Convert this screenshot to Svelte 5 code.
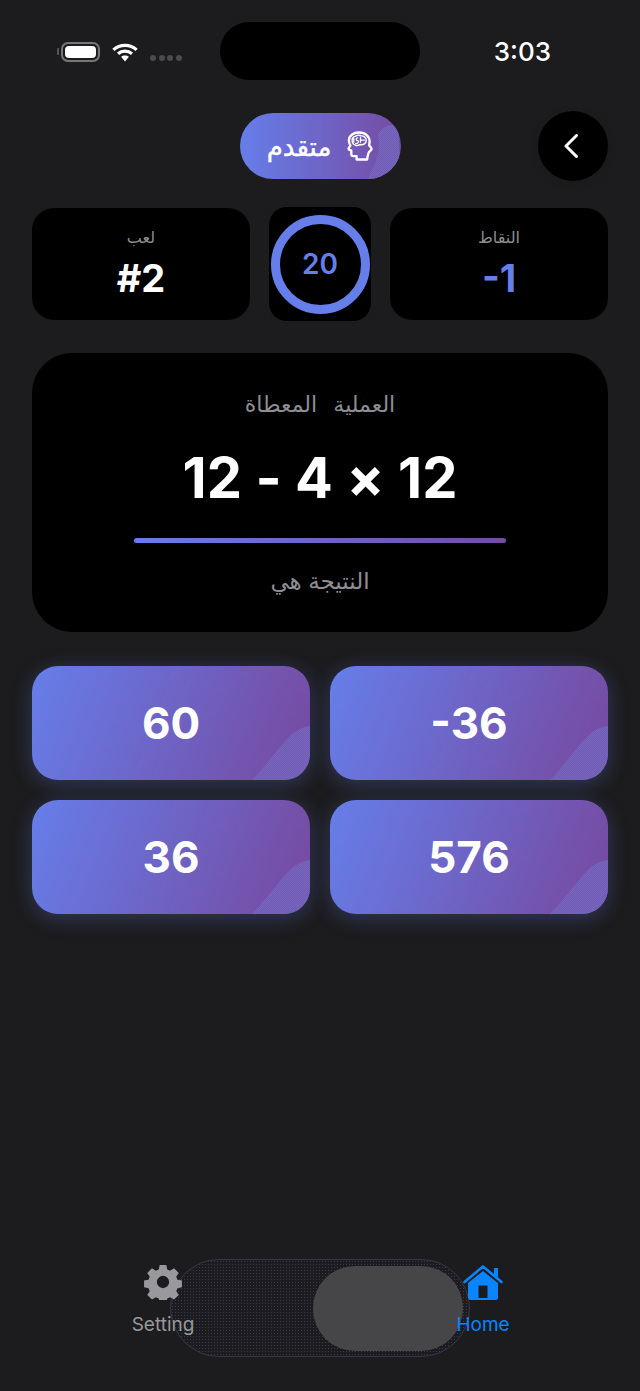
<script>
  const answers = ['60', '-36', '36', '576'];
</script>

<div class="screen">
  <div class="status">
    <div class="status-left">
      <div class="battery"><div class="battery-fill"></div></div>
      <svg class="wifi" viewBox="0 0 28 22" aria-hidden="true">
        <path d="M1.500 8.200C8.500 1.600 19.500 1.600 26.500 8.200" class="arc" />
        <path d="M6.500 12.400C10.800 8.600 17.200 8.600 21.500 12.400" class="arc" />
        <path d="M9.800 15.600 14 20.600 18.200 15.600C15.800 13.600 12.200 13.600 9.800 15.600Z" fill="#fff" />
      </svg>
      <div class="dots"><i></i><i></i><i></i><i></i></div>
    </div>
    <div class="island"></div>
    <div class="time">3:03</div>
  </div>

  <div class="header">
    <div class="level">
      <svg class="blob" viewBox="0 0 161 66" aria-hidden="true">
        <defs>
          <pattern id="dither-level" width="2" height="2" patternUnits="userSpaceOnUse">
            <rect width="2" height="2" fill="#7a58aa" />
            <rect width="1" height="1" fill="#6e6ac8" />
            <rect x="1" y="1" width="1" height="1" fill="#6e6ac8" />
          </pattern>
        </defs>
        <path d="M128 66C135 50 141 40 138 22 141 15 149 10 158 12L161 66Z" fill="url(#dither-level)" />
      </svg>
      <span class="level-text">متقدم</span>
      <svg class="brain" viewBox="0 0 28 32" aria-hidden="true">
        <g transform="translate(28 0) scale(-1 1)">
          <path d="M6 29.500h11v-3.500h3.500c1.600 0 2-1 2-2.200V20c1.800 0 2.800-.6 2.800-1.700 0-1-1-2-1.800-3.300.8-1.500 1.500-3 1.500-5.200C25 4.800 20.500 1.500 14.500 1.500 8 1.500 3.500 5.500 3.500 11c0 1.500.5 2.500.5 3.500 0 1-2.500 2-2.500 4 0 1.700 2.500 2.200 3 4 .5 2 1.500 3.500 1.500 7Z" fill="none" stroke="#fff" stroke-width="2.400" stroke-linejoin="round"/>
          <path d="M7 9.500c0-2.500 2.500-4.500 5-4.500 1.500-1 5-1 6.500.5 2.500.5 3.500 3 3 5.500-.5 2-2 3.500-4 4-2.500 0-3.500-1-5-1-2 .5-5.500-1-5.500-4.500Z" fill="none" stroke="#fff" stroke-width="1.500"/>
          <path d="M9 9.500h4M13 6.500v5M16 7c2 0 2 3 0 3s-1 3 2 3M20 7.500v4" fill="none" stroke="#fff" stroke-width="1.300" stroke-linecap="round"/>
        </g>
      </svg>
    </div>
    <button class="back" aria-label="Back">
      <svg viewBox="0 0 16 24" aria-hidden="true"><path d="M13.500 1.500 3 12l10.500 10.500" fill="none" stroke="#fff" stroke-width="3" stroke-linecap="round" stroke-linejoin="round"/></svg>
    </button>
  </div>

  <div class="stats">
    <div class="stat">
      <span class="stat-label">لعب</span>
      <span class="stat-value">#2</span>
    </div>
    <div class="timer">
      <div class="ring">20</div>
    </div>
    <div class="stat">
      <span class="stat-label">النقاط</span>
      <span class="stat-value accent">-1</span>
    </div>
  </div>

  <div class="problem">
    <div class="problem-label">العملية المعطاة</div>
    <div class="expr">12 - 4 × 12</div>
    <div class="rule"></div>
    <div class="result-label">النتيجة هي</div>
  </div>

  <div class="answers">
    {#each answers as a, i}
      <button class="answer">
        <svg class="corner" viewBox="0 0 58 54" aria-hidden="true">
          <defs>
            <pattern id="dither-{i}" width="2" height="2" patternUnits="userSpaceOnUse">
              <rect width="2" height="2" fill="#7a59ac" />
              <rect width="1" height="1" fill="#6e69c6" />
              <rect x="1" y="1" width="1" height="1" fill="#6e69c6" />
            </pattern>
          </defs>
          <path d="M0 54C14 40 26 22 36 12 42 5 50 1 58 0V54Z" fill="url(#dither-{i})" />
        </svg>
        <span>{a}</span>
      </button>
    {/each}
  </div>

  <div class="tabs">
    <div class="glass"><div class="thumb"></div></div>
    <div class="tab">
      <svg class="tab-icon" viewBox="0 0 38 38" aria-hidden="true">
        <path fill="#98989d" fill-rule="evenodd" d="M15.500 1h7l1 4.700 3.100 1.300 4-2.600 5 5-2.600 4 1.300 3.100 4.700 1v7l-4.700 1-1.300 3.100 2.600 4-5 5-4-2.600-3.100 1.300-1 4.700h-7l-1-4.700-3.100-1.300-4 2.600-5-5 2.600-4-1.300-3.100-4.700-1v-7l4.700-1 1.300-3.100-2.600-4 5-5 4 2.600 3.100-1.300ZM19 12.500a6.500 6.500 0 1 0 0 13 6.500 6.500 0 0 0 0-13Z" />
      </svg>
      <span class="tab-label">Setting</span>
    </div>
    <div class="tab active">
      <svg class="tab-icon" viewBox="0 0 40 36" aria-hidden="true">
        <path d="M1.500 18 20 2.500 38.500 18" fill="none" stroke="#0a84ff" stroke-width="2.600" stroke-linecap="round" stroke-linejoin="round"/>
        <path d="M31 4h4v10l-4-3Z" fill="#0a84ff"/>
        <path fill="#0a84ff" fill-rule="evenodd" d="M20 7 35 19v14.500a2.500 2.500 0 0 1-2.500 2.500h-25A2.500 2.500 0 0 1 5 33.500V19ZM15.500 21.500v12.500h9V21.500Z"/>
      </svg>
      <span class="tab-label">Home</span>
    </div>
  </div>
</div>

<style>
  :global(body) {
    margin: 0;
    background: #1c1c1e;
  }
  .screen {
    width: 640px;
    height: 1391px;
    box-sizing: border-box;
    padding: 22px 32px 0;
    display: flex;
    flex-direction: column;
    background: #1c1c1e;
    font-family: Inter, "DejaVu Sans", sans-serif;
    color: #fff;
    overflow: hidden;
  }
  .status {
    height: 58px;
    display: grid;
    grid-template-columns: 1fr 200px 1fr;
    align-items: center;
  }
  .status-left {
    display: flex;
    align-items: center;
    padding-left: 29px;
  }
  .battery {
    position: relative;
    width: 39px;
    height: 20px;
    margin-top: 2px;
    box-sizing: border-box;
    border: 2px solid #77777b;
    border-radius: 7px;
    padding: 2px;
  }
  .battery::before {
    content: '';
    position: absolute;
    left: -6px;
    top: 4px;
    width: 2px;
    height: 7px;
    border-radius: 1px 0 0 1px;
    background: #55555a;
  }
  .battery-fill {
    height: 100%;
    border-radius: 4px;
    background: #fff;
  }
  .wifi {
    width: 26px;
    height: 21px;
    margin: 2px 0 0 12px;
  }
  .arc {
    fill: none;
    stroke: #fff;
    stroke-width: 3.400;
  }
  .dots {
    display: flex;
    gap: 2.500px;
    margin: 14px 0 0 12px;
  }
  .dots i {
    width: 6px;
    height: 6px;
    border-radius: 50%;
    background: #4a4a50;
  }
  .island {
    height: 58px;
    border-radius: 29px;
    background: #000;
  }
  .time {
    font-size: 26px;
    font-weight: 500;
    text-align: right;
    padding: 1px 57px 0 0;
  }

  .header {
    position: relative;
    margin-top: 31px;
    height: 70px;
    display: flex;
    justify-content: center;
    align-items: center;
  }
  .level {
    position: relative;
    width: 161px;
    height: 66px;
    border-radius: 33px;
    overflow: hidden;
    background: linear-gradient(90deg, #667eea, #764ba2);
    display: flex;
    align-items: center;
    justify-content: center;
    gap: 15px;
  }
  .blob {
    position: absolute;
    inset: 0;
    width: 100%;
    height: 100%;
  }
  .level-text {
    position: relative;
    font-size: 26px;
    font-weight: 400;
    -webkit-text-stroke: 0.4px #fff;
  }
  .brain {
    position: relative;
    width: 27px;
    height: 31px;
  }
  .back {
    position: absolute;
    right: 0;
    top: 0;
    width: 70px;
    height: 70px;
    padding: 0 4px 0 0;
    border: 0;
    border-radius: 50%;
    background: #000;
    display: flex;
    align-items: center;
    justify-content: center;
    box-shadow: 0 2px 10px rgba(0, 0, 0, .12);
  }
  .back svg {
    width: 16px;
    height: 24px;
  }

  .stats {
    margin-top: 26px;
    display: grid;
    grid-template-columns: 218px 102px 218px;
    justify-content: space-between;
    align-items: center;
  }
  .stat {
    height: 112px;
    box-sizing: border-box;
    padding-top: 19px;
    border-radius: 22px;
    background: #000;
    display: flex;
    flex-direction: column;
    align-items: center;
    gap: 11px;
  }
  .stat-label {
    font-size: 16px;
    line-height: 20px;
    color: #8e8e93;
  }
  .stat-value {
    font-size: 38px;
    line-height: 40px;
    font-weight: 700;
  }
  .accent {
    color: #667eea;
  }
  .timer {
    height: 114px;
    border-radius: 18px;
    background: #000;
    display: flex;
    align-items: center;
    justify-content: center;
  }
  .ring {
    width: 99px;
    height: 99px;
    box-sizing: border-box;
    border: 9px solid #667eea;
    border-radius: 50%;
    display: flex;
    align-items: center;
    justify-content: center;
    font-size: 28px;
    font-weight: 600;
    color: #667eea;
  }

  .problem {
    margin-top: 32px;
    height: 279px;
    box-sizing: border-box;
    padding-top: 36px;
    border-radius: 40px;
    background: #000;
    display: flex;
    flex-direction: column;
    align-items: center;
  }
  .problem-label {
    font-size: 22px;
    line-height: 30px;
    color: #8e8e93;
    word-spacing: 10px;
    letter-spacing: 1.500px;
  }
  .expr {
    margin-top: 25px;
    font-size: 56px;
    line-height: 68px;
    font-weight: 700;
    letter-spacing: 0.1px;
  }
  .rule {
    margin-top: 26px;
    width: 372px;
    height: 5px;
    border-radius: 3px;
    background: linear-gradient(90deg, #667eea, #764ba2);
  }
  .result-label {
    margin-top: 23px;
    font-size: 23px;
    line-height: 30px;
    color: #8e8e93;
  }

  .answers {
    margin-top: 34px;
    display: grid;
    grid-template-columns: 278px 278px;
    justify-content: space-between;
    gap: 20px;
  }
  .answer {
    position: relative;
    height: 114px;
    padding: 0;
    border: 0;
    border-radius: 26px;
    overflow: hidden;
    background: linear-gradient(110deg, #667eea 0%, #764ba2 95%);
    box-shadow: 0 4px 20px rgba(102, 126, 234, .3);
    color: #fff;
    font-family: inherit;
    font-size: 44px;
    font-weight: 700;
  }
  .answer span {
    position: relative;
  }
  .corner {
    position: absolute;
    right: 0;
    bottom: 0;
    width: 58px;
    height: 54px;
  }

  .tabs {
    position: relative;
    margin-top: auto;
    margin-bottom: 34px;
    height: 98px;
    display: flex;
    justify-content: space-between;
    padding: 0 90px 0 96px;
  }
  .glass {
    position: absolute;
    left: 138px;
    top: 0;
    width: 300px;
    height: 98px;
    box-sizing: border-box;
    padding: 6px;
    border: 1px solid #37374a;
    border-radius: 49px;
    background: radial-gradient(circle, #3c3c48 .7px, transparent 1px) 0 0 / 3px 3px, #1b1b20;
    display: flex;
    justify-content: flex-end;
  }
  .thumb {
    width: 150px;
    height: 85px;
    border-radius: 42px;
    background: #464648;
  }
  .tab {
    position: relative;
    width: 70px;
    display: flex;
    flex-direction: column;
    align-items: center;
    color: #98989d;
  }
  .tab.active {
    color: #0a84ff;
  }
  .tab-icon {
    margin-top: 5px;
    width: 40px;
    height: 36px;
  }
  .tab-label {
    margin-top: 12px;
    font-size: 19px;
    line-height: 26px;
    white-space: nowrap;
  }
</style>
